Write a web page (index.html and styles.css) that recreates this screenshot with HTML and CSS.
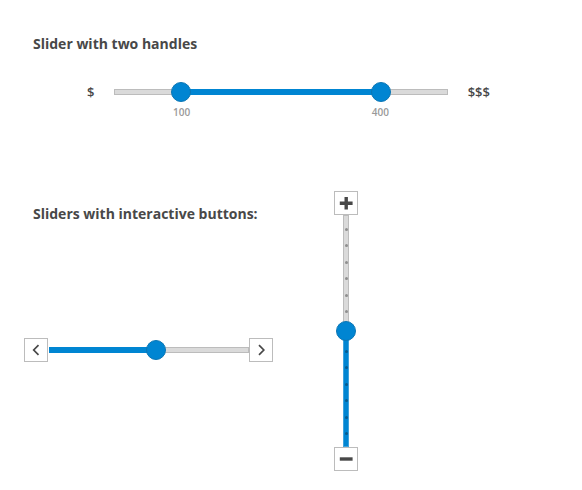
FILE: index.html
```html
<!DOCTYPE html>
<html lang="en">
<head>
<meta charset="utf-8">
<meta name="viewport" content="width=device-width, initial-scale=1">
<title>Sliders</title>
<link rel="stylesheet" href="styles.css">
</head>
<body>
<main class="page">
  <section class="price">
    <h2 class="title">Slider with two handles</h2>
    <div class="price-row">
      <span class="bound">$</span>
      <div class="dual">
        <div class="dual-fill"></div>
        <input class="range" type="range" min="0" max="500" value="100" id="low" aria-label="Lowest price">
        <input class="range" type="range" min="0" max="500" value="400" id="high" aria-label="Highest price">
        <output class="value value-low" for="low">100</output>
        <output class="value value-high" for="high">400</output>
      </div>
      <span class="bound">$$$</span>
    </div>
  </section>

  <section class="steppers">
    <div class="steppers-main">
      <h2 class="title">Sliders with interactive buttons:</h2>
      <div class="stepper">
        <button class="step" type="button" aria-label="Previous">
          <svg class="icon" viewBox="0 0 14 14"><path class="chevron" d="M9.5 2.2 4.7 7l4.8 4.8"/></svg>
        </button>
        <input class="range range-filled" type="range" min="0" max="100" value="54" aria-label="Position">
        <button class="step" type="button" aria-label="Next">
          <svg class="icon" viewBox="0 0 14 14"><path class="chevron" d="M5 2.2 9.8 7 5 11.8"/></svg>
        </button>
      </div>
    </div>
    <div class="zoomer">
      <button class="step" type="button" aria-label="Zoom in">
        <svg class="icon" viewBox="0 0 14 14"><path class="sign" d="M7.2 2.7v9.2M2.5 7.3h9.4"/></svg>
      </button>
      <div class="zoom-track">
        <input class="range range-vertical" type="range" min="0" max="12" value="6" aria-label="Zoom level">
        <div class="ticks">
          <div class="tick-group"><i></i><i></i><i></i><i></i><i></i><i></i></div>
          <div class="tick-group tick-group-on"><i></i><i></i><i></i><i></i><i></i><i></i></div>
        </div>
      </div>
      <button class="step" type="button" aria-label="Zoom out">
        <svg class="icon" viewBox="0 0 14 14"><path class="sign" d="M2.5 7h9.4"/></svg>
      </button>
    </div>
  </section>
</main>
</body>
</html>
```
FILE: styles.css
```css
* {
  box-sizing: border-box;
}

body {
  margin: 0;
  background: #fff;
  color: #484848;
  font-family: "Open Sans", sans-serif;
}

.page {
  padding: 34px 24px 16px;
}

.title {
  margin: 0 0 0 9px;
  font-size: 14px;
  line-height: 20px;
  font-weight: 700;
}

/* Shared range control */
.range {
  appearance: none;
  display: block;
  margin: 0;
  height: 20px;
  background: none;
}

.range::-webkit-slider-thumb {
  appearance: none;
  width: 20px;
  height: 20px;
  border: 1px solid #0b76b4;
  border-radius: 50%;
  background: #0085d2;
}

/* Two handles */
.price-row {
  display: flex;
  align-items: center;
  gap: 20px;
  margin-top: 28px;
  padding: 0 68px 0 63px;
}

.bound {
  font-size: 13px;
  line-height: 20px;
  font-weight: 600;
}

.dual {
  position: relative;
  flex: 1;
  height: 6px;
  border: 1px solid #bcbcbc;
  background: #dadada;
}

.dual-fill {
  position: absolute;
  inset: -1px 20%;
  background: #0085d2;
}

.dual .range {
  position: absolute;
  top: -8px;
  left: -11px;
  width: calc(100% + 22px);
  pointer-events: none;
}

.dual .range::-webkit-slider-thumb {
  pointer-events: auto;
}

.value {
  position: absolute;
  top: 15px;
  color: #999;
  font-size: 10px;
  line-height: 14px;
  font-weight: 600;
  transform: translateX(-50%);
}

.value-low {
  left: 20%;
}

.value-high {
  left: 80%;
}

/* Sliders with buttons */
.steppers {
  display: grid;
  grid-template-columns: minmax(0, 249px) auto;
  justify-content: start;
  gap: 61px;
  margin-top: 89px;
}

.steppers-main {
  padding-top: 13px;
}

.stepper {
  display: flex;
  align-items: center;
  margin-top: 114px;
}

.step {
  display: flex;
  flex: none;
  align-items: center;
  justify-content: center;
  width: 24px;
  height: 24px;
  padding: 0;
  border: 1px solid #bcbcbc;
  background: #fff;
}

.icon {
  width: 14px;
  height: 14px;
  fill: none;
  stroke: #484848;
}

.chevron {
  stroke-width: 1.7;
}

.sign {
  stroke-width: 3.4;
  stroke-linecap: square;
  stroke-linejoin: round;
}

.range-filled {
  flex: 1;
  min-width: 0;
  margin-left: 1px;
}

.range-filled::-webkit-slider-runnable-track {
  height: 6px;
  border: 1px solid #bcbcbc;
  background: linear-gradient(to right, #0085d2 54%, #dadada 54%) border-box;
  border-image: linear-gradient(to right, #0085d2 54%, #bcbcbc 54%) 1;
}

.range-filled::-webkit-slider-thumb {
  margin-top: -8px;
}

.zoomer {
  display: flex;
  flex-direction: column;
  align-items: center;
}

.zoom-track {
  position: relative;
  width: 20px;
  height: 232px;
}

.range-vertical {
  writing-mode: vertical-lr;
  direction: rtl;
  width: 20px;
  height: 100%;
}

.range-vertical::-webkit-slider-runnable-track {
  width: 6px;
  border: 1px solid #bcbcbc;
  border-image: linear-gradient(to bottom, #bcbcbc 50%, #3fa2dc 50%) 1;
  background: linear-gradient(to bottom, #dadada 50%, #0085d2 50%) border-box;
}

.range-vertical::-webkit-slider-thumb {
  margin-left: -8px;
}

.ticks {
  position: absolute;
  inset: 13px 0 12px;
  display: flex;
  flex-direction: column;
  align-items: center;
  justify-content: space-between;
  pointer-events: none;
}

.tick-group {
  display: flex;
  flex-direction: column;
  justify-content: space-between;
  height: 85px;
}

.tick-group i {
  width: 3px;
  height: 3px;
  border-radius: 50%;
  background: #8e8e8e;
}

.tick-group-on i {
  background: #055a8e;
}
```
